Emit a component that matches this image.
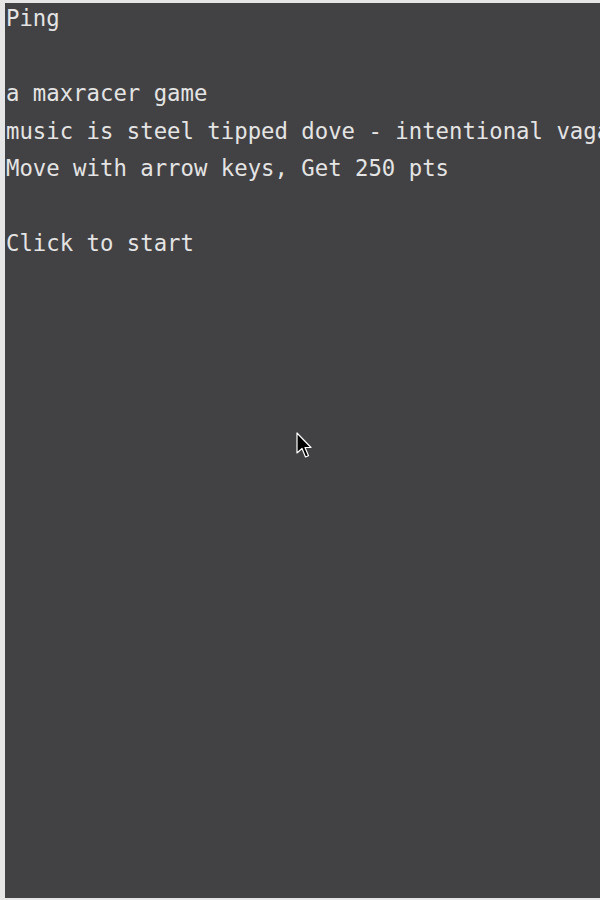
export default function App() {
  const lines = [
    "Ping",
    "",
    "a maxracer game",
    "music is steel tipped dove - intentional vagabond",
    "Move with arrow keys, Get 250 pts",
    "",
    "Click to start",
  ];
  return (
    <div className="w-[600px] h-[900px] bg-[#e6e6e6] pl-[5px] pt-[3px] pb-[2px] overflow-hidden">
      <div className="relative w-[595px] h-[895px] bg-[#424143] overflow-hidden">
        <div className="-mt-[3px] pl-[1px] text-[22.3px] leading-[37.5px] text-[#e4e4e4] whitespace-pre" style={{ fontFamily: '"DejaVu Sans Mono", "Liberation Mono", monospace' }}>
          {lines.map((l, i) => (
            <div key={i} className="h-[37.5px]">{l || " "}</div>
          ))}
        </div>
        <svg className="absolute left-[291px] top-[429px]" width="16" height="28" viewBox="0 0 16 28">
          <path d="M1 1 L1 21 L6 16.5 L9.5 25 L12.5 23.8 L9 15.5 L15 15.5 Z" fill="#000" stroke="#fff" strokeWidth="1.2" strokeLinejoin="round" />
        </svg>
      </div>
    </div>
  );
}
